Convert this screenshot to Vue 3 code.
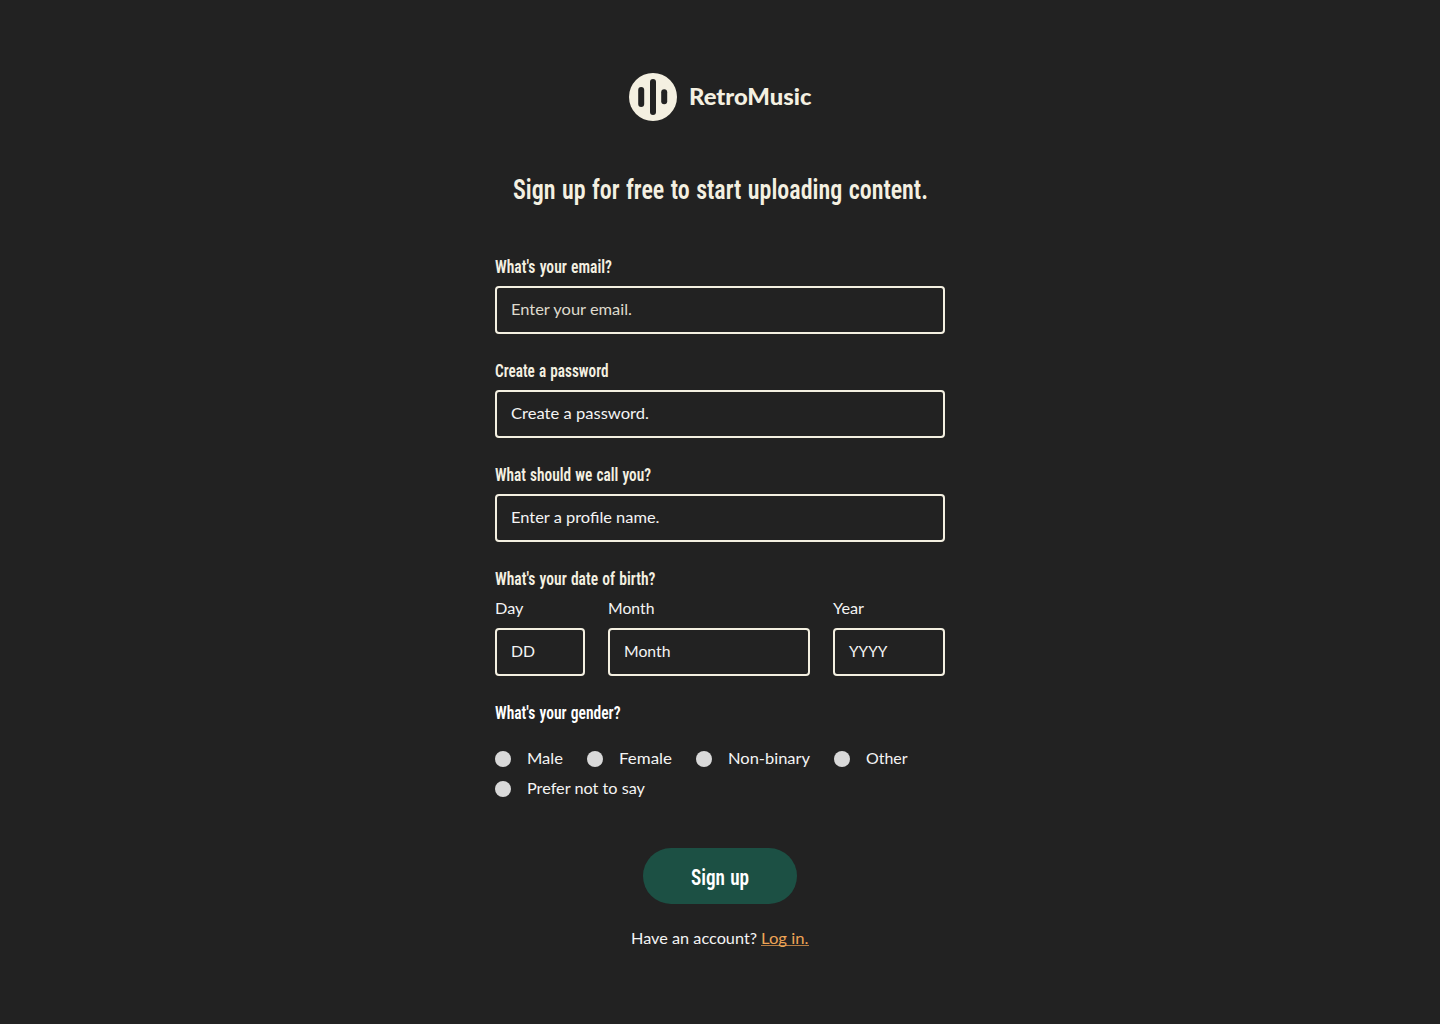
<script setup>
import { h } from 'vue'

// A single line of text set to a fixed measure.
const FitText = ({ text, w, height = 22, base = 16.2 }) =>
  h('svg', { width: w, height, viewBox: `0 0 ${w} ${height}` }, [
    h('text', { x: 0, y: base, textLength: w, lengthAdjust: 'spacingAndGlyphs' }, text),
  ])
FitText.props = ['text', 'w', 'height', 'base']

const fields = [
  { label: "What's your email?", lw: 117, hint: 'Enter your email.', hw: 121, soft: true },
  { label: 'Create a password', lw: 113.5, hint: 'Create a password.', hw: 138 },
  { label: 'What should we call you?', lw: 156, hint: 'Enter a profile name.', hw: 148.5 },
]
const dates = [
  { cls: 'day', label: 'Day', lw: 28.5, hint: 'DD', hw: 24 },
  { cls: 'month', label: 'Month', lw: 46.5, hint: 'Month', hw: 46.5 },
  { cls: 'year', label: 'Year', lw: 31, hint: 'YYYY', hw: 38.5 },
]
const genders = [
  { text: 'Male', w: 36 },
  { text: 'Female', w: 53 },
  { text: 'Non-binary', w: 82 },
  { text: 'Other', w: 41.5 },
  { text: 'Prefer not to say', w: 118 },
]
</script>

<template>
  <main class="page">
    <header class="brand">
      <svg class="mark" width="48" height="48" viewBox="0 0 48 48">
        <circle cx="24" cy="24" r="24" fill="#f4f0e1" />
        <rect x="9.2" y="14" width="6" height="20" rx="3" fill="#222" />
        <rect x="21" y="6" width="6" height="36" rx="3" fill="#222" />
        <rect x="32.2" y="16.2" width="6" height="15" rx="3" fill="#222" />
      </svg>
      <FitText class="name" text="RetroMusic" :w="122.5" :height="48" :base="31.7" />
    </header>
    <h1 class="title">
      <FitText class="cond heading" text="Sign up for free to start uploading content." :w="415" :height="40" :base="29.7" />
    </h1>
    <form class="form">
      <div v-for="f in fields" :key="f.label" class="group">
        <FitText class="cond label" :text="f.label" :w="f.lw" :height="24" :base="18.7" />
        <div class="box">
          <FitText class="body" :class="{ soft: f.soft }" :text="f.hint" :w="f.hw" />
        </div>
      </div>
      <div class="group">
        <FitText class="cond label" text="What's your date of birth?" :w="160.5" :height="24" :base="18.7" />
        <div class="dates">
          <div v-for="d in dates" :key="d.cls" class="date" :class="d.cls">
            <FitText class="body" :text="d.label" :w="d.lw" />
            <div class="box">
              <FitText class="body" :text="d.hint" :w="d.hw" />
            </div>
          </div>
        </div>
      </div>
      <div class="gender">
        <FitText class="cond label white" text="What's your gender?" :w="125.5" :height="24" :base="18.7" />
        <div class="options">
          <label v-for="g in genders" :key="g.text" class="option">
            <span class="dot"></span>
            <FitText class="body" :text="g.text" :w="g.w" />
          </label>
        </div>
      </div>
    </form>
    <button class="submit" type="button">
      <FitText class="cond action" text="Sign up" :w="58" :height="56" :base="36.5" />
    </button>
    <p class="login">
      <FitText class="body" text="Have an account?" :w="126" />
      <a class="link"><FitText class="body orange" text="Log in." :w="47.5" /></a>
    </p>
  </main>
</template>

<style>
body {
  margin: 0;
  background: #222;
}
</style>

<style scoped>
.page {
  box-sizing: border-box;
  min-height: 1024px;
  padding-top: 73px;
  display: flex;
  flex-direction: column;
  align-items: center;
  background: #222;
}
svg {
  display: block;
  flex: none;
  overflow: visible;
}
.brand {
  display: flex;
  gap: 12px;
}
.name {
  font: 900 23px Lato, sans-serif;
  fill: #f4f0e1;
}
.title {
  margin: 48px 0 45px;
}
.cond {
  font-family: Roboto, sans-serif;
  font-stretch: 75%;
  font-weight: 600;
  word-spacing: 0.04em;
  fill: #f4f0e1;
}
.heading {
  font-size: 27.5px;
}
.label {
  font-size: 17.6px;
}
.white,
.action {
  fill: #fff;
}
.action {
  font-size: 22px;
}
.body {
  font: 400 16px Lato, sans-serif;
  fill: #f4f4f4;
}
.soft {
  fill: #dedacd;
}
.form {
  width: 450px;
  display: flex;
  flex-direction: column;
  gap: 24px;
}
.group {
  display: flex;
  flex-direction: column;
  gap: 8px;
}
.box {
  box-sizing: border-box;
  height: 48px;
  padding: 11px 14px;
  border: 2px solid #f4f0e1;
  border-radius: 4px;
}
.dates {
  display: flex;
  justify-content: space-between;
}
.date {
  display: flex;
  flex-direction: column;
  gap: 8px;
}
.day {
  width: 20%;
}
.month {
  width: 45%;
}
.year {
  width: 25%;
}
.gender {
  display: flex;
  flex-direction: column;
  gap: 24px;
}
.options {
  display: flex;
  flex-wrap: wrap;
  gap: 8px 24px;
}
.option {
  display: flex;
  align-items: center;
  gap: 16px;
}
.dot {
  width: 16px;
  height: 16px;
  border-radius: 50%;
  background: #d9d9d9;
}
.submit {
  margin: 48px 0 24px;
  padding: 0 48px;
  height: 56px;
  border: 0;
  border-radius: 28px;
  background: #1c5044;
}
.login {
  display: flex;
  gap: 4px;
  margin: 0;
}
.link {
  height: 17px;
  border-bottom: 1px solid #b77e45;
}
.orange {
  fill: #eda456;
}
</style>
